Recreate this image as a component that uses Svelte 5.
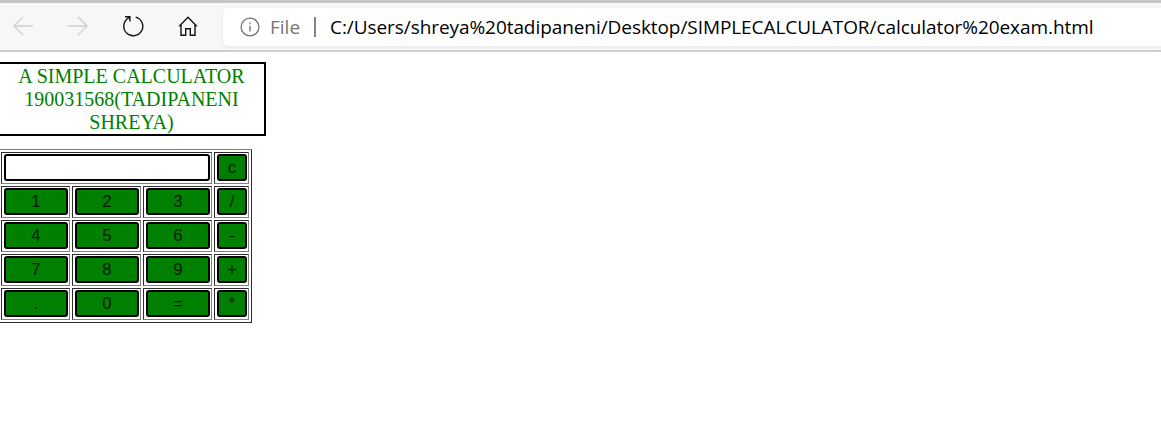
<script>
  const keys = [
    ['1', '2', '3', '/'],
    ['4', '5', '6', '-'],
    ['7', '8', '9', '+'],
    ['.', '0', '=', '*']
  ];
  let display = $state('');

  function press(key) {
    if (key === '=') {
      try {
        display = String(Function('return (' + display + ')')());
      } catch {
        display = '';
      }
    } else {
      display += key;
    }
  }
</script>

<div class="window">
  <header class="toolbar">
    <nav>
      <svg class="off" width="20" height="20" viewBox="0 0 20 20"><path d="M20 10H1M10 1 1 10l9 9" /></svg>
      <svg class="off forward" width="20" height="20" viewBox="0 0 20 20"><path d="M0 10h19M10 1l9 9-9 9" /></svg>
      <svg width="22" height="22" viewBox="0 0 22 22"><path d="M13.700 2.100A9.500 9.500 0 1 1 7.200 2.700M3 1.800h4.900v4.700" /></svg>
      <svg width="20" height="22" viewBox="0 0 20 22"><path d="M1.200 11.200 10 2.300l8.800 8.900M3 9.500V20.200h4.700V13.700h4.600v6.500H17V9.500" /></svg>
    </nav>
    <div class="address">
      <svg class="info" width="20" height="20" viewBox="0 0 20 20">
        <circle cx="10" cy="10" r="8.900" />
        <path d="M10 8.800v5.700M10 5.500v1.700" />
      </svg>
      <span class="scheme">File</span>
      <span class="divider"></span>
      <span class="url">C:/Users/shreya%20tadipaneni/Desktop/SIMPLECALCULATOR/calculator%20exam.html</span>
    </div>
  </header>

  <main>
    <h1>A SIMPLE CALCULATOR 190031568(TADIPANENI SHREYA)</h1>
    <div class="calculator">
      <div class="cell wide"><input bind:value={display} aria-label="display" /></div>
      <div class="cell"><button onclick={() => (display = '')}>c</button></div>
      {#each keys as row}
        {#each row as key}
          <div class="cell"><button onclick={() => press(key)}>{key}</button></div>
        {/each}
      {/each}
    </div>
  </main>
</div>

<style>
  .window {
    height: 430px;
    overflow: hidden;
    background: #fff;
  }
  .toolbar {
    box-sizing: border-box;
    height: 52px;
    display: flex;
    background: #f7f7f7;
    border-top: 3px solid #c6c6c6;
    border-bottom: 2px solid #cecece;
  }
  nav {
    width: 222px;
    box-sizing: border-box;
    padding: 0 0 1px 13px;
    display: flex;
    align-items: center;
    gap: 34px;
    flex: none;
  }
  svg {
    fill: none;
    stroke: #151515;
    stroke-width: 1.4;
    flex: none;
  }
  svg.off {
    stroke: #d0d0d0;
  }
  svg.forward {
    margin-left: 1px;
  }
  .address {
    flex: 1;
    height: 38px;
    margin: 5px 0 0 1px;
    box-sizing: border-box;
    padding-left: 17px;
    display: flex;
    align-items: center;
    background: #fff;
    border-radius: 5px 0 0 5px;
    box-shadow: 0 1px 4px #e4e4e4;
    font-family: "Open Sans", "Noto Sans", sans-serif;
    font-size: 19px;
    white-space: nowrap;
  }
  svg.info {
    stroke: #727272;
    stroke-width: 1.3;
  }
  .scheme {
    width: 44px;
    margin-left: 10px;
    color: #757575;
  }
  .divider {
    width: 2px;
    height: 20px;
    background: #858585;
    flex: none;
  }
  .url {
    margin-left: 14px;
    color: #000;
    letter-spacing: -0.07px;
  }
  h1 {
    box-sizing: border-box;
    width: 268px;
    height: 74px;
    margin: 10px 0 13px -2px;
    padding: 1px 7px 0 6px;
    border: 2px solid #000;
    color: green;
    font: 20px/23px "Liberation Serif", serif;
    text-align: center;
  }
  .calculator {
    box-sizing: border-box;
    width: 254px;
    margin-left: -2px;
    padding: 2px;
    display: grid;
    grid-template-columns: repeat(3, 69px) 35px;
    grid-auto-rows: 32px;
    gap: 2px;
    border: 1px solid;
    border-color: #808080 #2c2c2c #2c2c2c #808080;
  }
  .cell {
    box-sizing: border-box;
    display: flex;
    padding: 1px 1px 2px 2px;
    border: 1px solid;
    border-color: #2c2c2c #808080 #808080 #2c2c2c;
  }
  .wide {
    grid-column: span 3;
  }
  button,
  input {
    box-sizing: border-box;
    width: 100%;
    min-width: 0;
    margin: 0;
    padding: 0;
    border: 2px solid #000;
    border-radius: 3px;
    background: green;
    color: #001a00;
    font: 16.7px/23px "Liberation Sans", sans-serif;
  }
  input {
    background: #fff;
  }
</style>
